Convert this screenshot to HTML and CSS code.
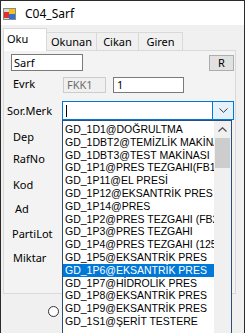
FILE: index.html
```html
<!DOCTYPE html>
<html>
<head>
<meta charset="utf-8">
<link rel="stylesheet" href="styles.css">
</head>
<body>
<div class="window">
  <div class="titlebar">
    <svg class="app-icon" width="13" height="12" viewBox="0 0 13 12">
      <rect x="0.5" y="0.5" width="12" height="11" fill="#d8d8d8" stroke="#8a8a8a"/>
      <rect x="1" y="4" width="5" height="6" fill="#e0322c"/>
      <rect x="6" y="1" width="6" height="5" fill="#f2c21b"/>
      <rect x="6" y="6" width="6" height="5" fill="#2f6fd6"/>
    </svg>
    <span class="title">C04_Sarf</span>
  </div>
  <div class="client">
    <div class="tabs">
      <div class="tab tab-active">Oku</div>
      <div class="tab tab-okunan">Okunan</div>
      <div class="tab tab-cikan">Cikan</div>
      <div class="tab tab-giren">Giren</div>
    </div>
    <div class="page">
      <div class="row row-top">
        <div class="textbox tb-sarf">Sarf</div>
        <div class="button">R</div>
      </div>
      <div class="row row-evrk">
        <div class="label lbl-evrk">Evrk</div>
        <div class="textbox tb-disabled">FKK1</div>
        <div class="textbox tb-one">1</div>
      </div>
      <div class="row row-combo">
        <div class="label lbl-sor">Sor.Merk</div>
        <div class="combo">
          <span class="caret"></span>
          <div class="combo-btn">
            <svg width="9" height="5" viewBox="0 0 9 5"><polyline points="0.5,0.5 4.5,4.3 8.5,0.5" fill="none" stroke="#3c3c3c" stroke-width="1"/></svg>
          </div>
        </div>
      </div>
      <div class="labels">
        <div class="label lbl lbl-dep">Dep</div>
        <div class="label lbl lbl-raf">RafNo</div>
        <div class="label lbl lbl-kod">Kod</div>
        <div class="label lbl lbl-ad">Ad</div>
        <div class="label lbl lbl-parti">PartiLot</div>
        <div class="label lbl lbl-miktar">Miktar</div>
      </div>
    </div>
    <div class="footer">
      <span class="radio"></span>
    </div>
  </div>
  <div class="dropdown">
    <div class="items">
      <div class="item">GD_1D1@DOĞRULTMA</div>
      <div class="item">GD_1DBT2@TEMİZLİK MAKİNASI</div>
      <div class="item">GD_1DBT3@TEST MAKİNASI</div>
      <div class="item">GD_1P1@PRES TEZGAHI(FB1)</div>
      <div class="item">GD_1P11@EL PRESİ</div>
      <div class="item">GD_1P12@EKSANTRİK PRES</div>
      <div class="item">GD_1P14@PRES</div>
      <div class="item">GD_1P2@PRES TEZGAHI (FB2)</div>
      <div class="item">GD_1P3@PRES TEZGAHI</div>
      <div class="item">GD_1P4@PRES TEZGAHI (125)</div>
      <div class="item">GD_1P5@EKSANTRİK PRES</div>
      <div class="item item-selected">GD_1P6@EKSANTRİK PRES</div>
      <div class="item">GD_1P7@HİDROLİK PRES</div>
      <div class="item">GD_1P8@EKSANTRİK PRES</div>
      <div class="item">GD_1P9@EKSANTRİK PRES</div>
      <div class="item">GD_1S1@ŞERİT TESTERE</div>
    </div>
    <div class="scrollbar">
      <div class="scroll-up">
        <svg width="9" height="5" viewBox="0 0 9 5"><polyline points="0.5,4.5 4.5,0.7 8.5,4.5" fill="none" stroke="#505050" stroke-width="1.2"/></svg>
      </div>
      <div class="thumb"></div>
    </div>
  </div>
</div>
</body>
</html>
```

FILE: styles.css
```css
* { box-sizing: border-box; }

body {
  margin: 0;
  background: #ffffff;
  font-family: "Noto Sans", "Open Sans", sans-serif;
  font-size: 11px;
  color: #000;
}

.window {
  position: relative;
  width: 245px;
  height: 333px;
  border: 1px solid #2b2b2b;
  border-bottom: none;
  background: #f0f0f0;
  overflow: hidden;
}

.titlebar {
  height: 24px;
  background: #ffffff;
  display: flex;
  align-items: center;
  padding-left: 2px;
  gap: 9px;
}

.app-icon { flex: none; margin-top: 1px; }

.title {
  font-size: 12px;
  color: #000;
  margin-top: 1px;
}

.client {
  padding-left: 2px;
}

.tabs {
  position: relative;
  z-index: 2;
  display: flex;
  align-items: flex-end;
  height: 26px;
  margin-bottom: -1px;
}

.tab {
  height: 18px;
  margin-bottom: 1px;
  border: 1px solid #d9d9d9;
  border-bottom: none;
  background: #f0f0f0;
  text-align: center;
  line-height: 17px;
  white-space: nowrap;
}

.tab-active {
  width: 44px;
  height: 23px;
  margin-bottom: 0;
  background: #ffffff;
  text-align: left;
  padding-left: 3px;
  line-height: 20px;
  position: relative;
  z-index: 1;
}

.tab-okunan { width: 51px; margin-left: -1px; }
.tab-cikan { width: 43px; margin-left: -1px; }
.tab-giren { width: 45px; margin-left: -1px; }

.page {
  width: 233px;
  height: 244px;
  border: 1px solid #d9d9d9;
  background: #f3f3f3;
  padding-top: 3px;
}

.row {
  display: flex;
  align-items: flex-start;
}

.textbox {
  height: 17px;
  border: 1px solid #7a7a7a;
  background: #ffffff;
  padding-left: 2px;
  line-height: 15px;
  white-space: nowrap;
}

.tb-sarf {
  width: 72px;
  margin-left: 7px;
}

.button {
  width: 25px;
  height: 16px;
  margin-left: auto;
  margin-right: 1px;
  margin-top: 1px;
  border: 1px solid #adadad;
  background: #e1e1e1;
  text-align: center;
  line-height: 14px;
}

.row-evrk {
  margin-top: 6px;
  align-items: center;
}

.label {
  line-height: 14px;
  white-space: nowrap;
}

.lbl-evrk {
  width: 59px;
  padding-left: 9px;
  margin-top: -2px;
}

.tb-disabled {
  width: 43px;
  height: 16px;
  border-color: #cccccc;
  background: #f0f0f0;
  color: #6d6d6d;
  padding-left: 3px;
  line-height: 14px;
}

.tb-one {
  width: 71px;
  height: 16px;
  margin-left: 7px;
  padding-left: 3px;
  line-height: 14px;
}

.row-combo {
  margin-top: 8px;
  align-items: center;
}

.lbl-sor {
  width: 58px;
  padding-left: 3px;
}

.combo {
  width: 172px;
  height: 19px;
  border: 1px solid #0078d7;
  background: #ffffff;
  display: flex;
  align-items: center;
}

.caret {
  width: 1px;
  height: 12px;
  background: #000;
  margin-left: 3px;
}

.combo-btn {
  margin-left: auto;
  width: 21px;
  height: 17px;
  background: #e5f1fb;
  border-left: 1px solid #0078d7;
  display: flex;
  align-items: center;
  justify-content: center;
}

.labels {
  display: flex;
  flex-direction: column;
  padding-left: 9px;
}

.lbl { height: 14px; }
.lbl-dep { margin-top: 10px; }
.lbl-raf { margin-top: 8px; }
.lbl-kod { margin-top: 12px; }
.lbl-ad { margin-top: 10px; padding-left: 2px; }
.lbl-parti { margin-top: 11px; margin-left: -1px; }
.lbl-miktar { margin-top: 10px; }

.footer {
  padding-left: 45px;
  padding-top: 12px;
}

.radio {
  display: block;
  width: 11px;
  height: 11px;
  border: 1px solid #333333;
  border-radius: 50%;
  background: #ffffff;
}

.dropdown {
  position: absolute;
  left: 61px;
  top: 119px;
  width: 170px;
  height: 230px;
  border: 1px solid #2a4f7a;
  background: #ffffff;
  display: flex;
  z-index: 5;
}

.items {
  flex: 1;
  min-width: 0;
  padding-top: 2px;
  overflow: hidden;
}

.item {
  height: 12.8px;
  line-height: 12.8px;
  padding-left: 2px;
  white-space: nowrap;
  overflow: hidden;
  font-family: "Liberation Sans", Arial, sans-serif;
  font-size: 10.5px;
  color: #000;
}

.item-selected {
  background: #0078d7;
  color: #ffffff;
}

.scrollbar {
  width: 17px;
  flex: none;
  background: #f0f0f0;
  display: flex;
  flex-direction: column;
  align-items: center;
}

.scroll-up {
  height: 17px;
  width: 17px;
  display: flex;
  align-items: center;
  justify-content: center;
}

.thumb {
  width: 15px;
  height: 30px;
  background: #cdcdcd;
}
```
